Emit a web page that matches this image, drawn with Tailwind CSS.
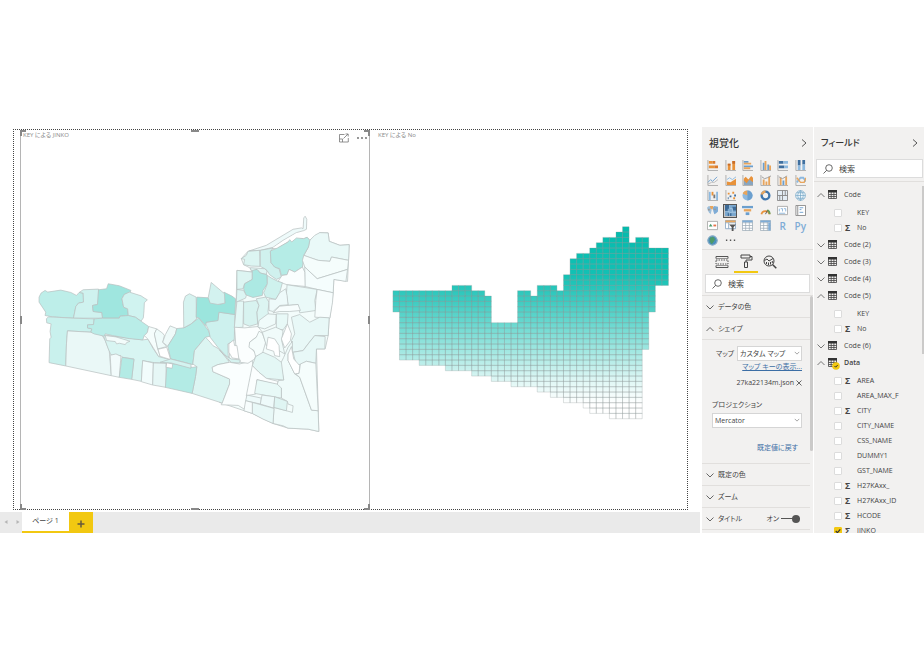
<!DOCTYPE html>
<html lang="ja">
<head>
    <meta charset="UTF-8">
    <meta name="viewport" content="width=device-width, initial-scale=1.0">
    <title>レポート</title>
    <script src="https://cdn.jsdelivr.net/npm/@tailwindcss/browser@4"></script>
</head>
<body class="flex min-h-screen items-center bg-white font-['Open_Sans','Noto_Sans_CJK_JP',sans-serif] text-[7px] leading-3 text-[#444] [font-feature-settings:'palt']">
    <div class="flex w-full">
        <!-- Report canvas -->
        <main class="flex min-w-0 flex-1 flex-col">
            <div class="grow pt-0.5 pr-3 pb-0.5 pl-[13px]">
                <div class="flex border border-dotted border-[#444] pt-px pl-1.5">
                    <section class="relative min-w-0 flex-[349] border-x border-[#b5b5b5]">
                        <h2 class="absolute top-0 left-0.5 text-[6px] leading-2 text-[#888]">KEY による JINKO</h2>
                        <div class="absolute top-0.5 right-0.5 flex items-center gap-2">
                            <button aria-label="フォーカス モード">
                                <svg class="size-2.5" viewBox="0 0 10 10" fill="none" stroke="#777"><path d="M5.500 1.500H.5V9H9.300V5M.5 6H3.500V9M4.500 5.500L9 1M6.500 1H9.200V3.500" stroke-width=".8"/></svg>
                            </button>
                            <button aria-label="その他">
                                <svg class="h-2.5 w-2.5" viewBox="0 0 10 10" fill="#666"><circle cx="1" cy="5" r=".9"/><circle cx="5" cy="5" r=".9"/><circle cx="9" cy="5" r=".9"/></svg>
                            </button>
                        </div>
                        <svg class="block w-full" viewBox="6 0 1041 1128" stroke="#b9c1c1" stroke-width="2.200" stroke-linejoin="round">
                            <g transform="translate(630 222)">
                                <path fill="#f3fcfb" d="M22 195L68 200 60 187 42 178 35 160 55 138 92 135 143 128 175 110 232 96 240 105 270 82 295 83 298 108 330 120 358 118 353 228 312 222 310 262 300 337 298 337 295 390 286 430 260 430 267 677 235 670 175 667 130 653 68 623 -30 590 18 360Z"/>
                            </g>
                            <!-- west -->
                            <g transform="translate(30 417)">
                                <path fill="#bdeee9" d="M30 80L36 68 48 60 56 65 95 59 125 66 142 75 150 66 162 68 163 95 148 98 140 108 133 143 70 139 48 135 50 125 40 110 30 95Z"/>
                                <path fill="#cff2ef" d="M162 58L208 56 207 85 205 102 190 105 192 123 218 126 220 143 133 143 140 108 148 98 163 95 162 68 150 66Z"/>
                                <path fill="#9fe6df" d="M208 58L232 55 237 40 270 46 305 60 302 66 285 72 278 85 283 110 295 115 297 135 272 137 270 143 220 143 218 126 192 123 190 105 205 102Z"/>
                                <path fill="#d0f3f0" d="M285 72L300 65 335 76 347 84 354 88 345 97 344 120 342 142 335 152 318 140 297 135 295 115 283 110 278 85Z"/>
                                <path fill="#c9f1ed" d="M58 139L133 143 195 145 193 162 175 163 175 172 188 175 185 185 115 181 112 220 110 286 60 276 62 205 66 200 63 183 66 160 53 157 52 145Z"/>
                                <path fill="#eaf8f7" d="M115 181L185 185 218 193 228 210 240 240 246 315 110 286 112 220Z"/>
                                <path fill="#d8f5f2" d="M222 193L340 208 356 206 372 235 388 258 410 264 452 274 450 285 410 278 375 276 340 270 336 332 307 326 314 265 280 260 275 255 245 253 236 232Z"/>
                                <path fill="#b9ede8" d="M195 145L220 143 270 143 272 137 297 135 318 140 335 152 358 168 354 186 345 195 340 208 300 204 250 195 228 190 225 197 195 190 185 185 188 175 175 172 175 163 193 162Z"/>
                                <path fill="#f3fcfb" d="M228 195L260 199 302 212 292 216 288 222 270 218 262 220 258 213 232 210Z"/>
                                <path fill="#f2fbfb" d="M243 254L260 250 275 257 270 320 246 315Z"/>
                                <path fill="#b3ebe5" d="M278 260L314 266 307 326 270 320Z"/>
                                <path fill="#f2fcfc" d="M340 270L372 277 370 343 336 333Z"/>
                                <path fill="#e6f7f6" d="M372 277L410 278 410 350 370 343Z"/>
                                <path fill="#f5fdfc" d="M358 168L382 175 375 190 385 235 392 255 388 258 356 206 345 195 354 186Z"/>
                                <path fill="#effbfa" d="M382 175L400 188 405 195 400 215 412 228 385 235 375 190Z"/>
                                <path fill="#eefaf9" d="M408 192L422 166 442 174 438 190 415 227 400 215Z"/>
                                <path fill="#fff" d="M386 236L412 230 424 267 392 257Z"/>
                            </g>
                            <!-- centre -->
                            <g transform="translate(390 417)">
                                <path fill="#b3ebe5" d="M82 174L103 172 125 160 148 142 178 182 182 197 168 200 135 240 130 282 90 271 64 265 55 227 78 190Z"/>
                                <path fill="#d6f3f0" d="M102 95L108 77 120 70 140 80 141 145 125 160 103 172Z"/>
                                <path fill="#cdf1ee" d="M208 125L256 132 254 210 235 220 236 255 243 270 205 230 182 200 178 180 168 160 170 155 205 150Z"/>
                                <path fill="#9be5dd" d="M142 80L176 82 205 102 226 98 223 65 247 77 258 85 256 132 208 125 205 150 170 155 168 165 148 142 140 140Z"/>
                                <path fill="#d3f2ef" d="M185 36L225 70 226 98 205 102 182 98 176 82Z"/>
                                <path fill="#dcf5f2" d="M168 200L182 215 190 225 208 235 240 275 205 282 188 290 190 303 240 325 240 340 218 397 128 368 138 318 142 288 130 280 135 240Z"/>
                                <path fill="#b3ebe5" d="M53 276L130 290 142 288 138 318 128 368 48 350Z"/>
                                <path fill="#fff" d="M52 276L70 280 68 293 50 290Z"/>
                                <path fill="#d3f3f0" d="M64 265L110 277 125 281 124 293 65 277 32 275Z"/>
                                <path fill="#fafefe" d="M240 275L270 280 308 270 310 285 290 390 285 416 266 404 215 402 218 397 240 340 240 325 190 303 188 290 205 282Z"/>
                                <path fill="#e4f8f6" d="M254 172L262 92 282 92 280 170Z"/>
                            </g>
                            <!-- north east -->
                            <g transform="translate(630 222)">
                                <path fill="#eefafa" d="M58 137L110 120 160 90 190 72 215 68 220 70 222 38 226 33 231 42 230 72 222 76 200 82 160 105 130 126 92 135Z"/>
                                <path fill="#dcf5f2" d="M35 160L50 150 55 138 90 135 91 183 65 182 42 178 45 162Z"/>
                                <path fill="#d0f1ee" d="M92 135L130 128 122 140 124 172 135 185 148 190 155 215 140 222 120 208 112 195 105 190 92 183Z"/>
                                <path fill="#fff" stroke="none" d="M130 127L200 84 232 94 222 99 200 98 186 110 180 103 143 128Z"/>
                                <path fill="#eaf9f8" d="M240 105L255 90 270 82 295 83 298 108 330 120 358 118 356 165 305 155 300 168 265 165 235 155 222 150 236 125Z"/>
                                <path fill="#b5ece6" d="M143 128L175 110 180 103 186 110 200 98 222 100 232 96 240 105 236 125 222 150 218 185 195 200 178 192 172 208 155 210 150 190 135 185 124 172 122 137Z"/>
                                <path fill="#f5fdfc" d="M222 150L265 165 300 168 305 155 356 165 353 192 262 220 225 185 218 165Z"/>
                                <path fill="#f5fdfd" d="M225 185L262 220 353 192 348 228 312 222 310 262 262 252 225 243Z"/>
                                <path fill="#fafefe" d="M218 185L225 200 226 243 172 238 145 228 157 210 172 208 178 192 195 200Z"/>
                                <path fill="#ddf5f2" d="M22 195L68 200 68 222 45 235 40 250 22 252Z"/>
                                <path fill="#dff6f4" d="M62 187L105 190 112 197 110 207 92 203 82 192 66 198Z"/>
                                <path fill="#ace9e3" d="M68 195L82 192 92 203 112 208 113 235 100 255 98 270 70 276 48 268 42 250 45 235 68 222Z"/>
                                <path fill="#cff2ee" d="M113 210L125 218 145 228 158 232 150 262 138 282 108 275 102 262 105 255 113 235Z"/>
                                <path fill="#eaf9f8" d="M172 238L262 252 255 285 258 315 210 322 205 297 175 300 170 265Z"/>
                                <path fill="#f7fdfd" d="M262 252L310 262 308 290 300 338 255 335 258 285Z"/>
                                <path fill="#dcf5f3" d="M22 252L42 255 50 270 48 278 20 290Z"/>
                                <path fill="#d8f3f0" d="M42 290L80 285 88 300 82 320 84 355 60 362 42 355Z"/>
                                <path fill="#dcf5f2" d="M80 280L108 275 118 290 115 318 120 340 105 362 85 360 82 320 88 300Z"/>
                                <path fill="#eefafa" d="M118 280L138 282 150 262 168 250 172 270 175 298 150 300 130 318 118 315Z"/>
                                <path fill="#f7fdfd" d="M130 322L150 302 205 297 212 315 180 318 150 318Z"/>
                            </g>
                            <!-- south east -->
                            <g transform="translate(600 537)">
                                <path fill="#fbfefe" d="M45 50L75 52 115 48 128 65 90 95 92 110 110 130 105 145 85 158 62 155 50 125Z"/>
                                <path fill="#d6f3f0" d="M0 118L12 132 35 145 62 148 60 157 35 155Z"/>
                                <path fill="#fff" d="M28 100L42 88 45 105 52 105 58 145 38 142 28 125Z"/>
                                <path fill="#f5fdfc" d="M118 62L128 68 138 95 128 130 108 138 103 120 88 110 90 95 110 80Z"/>
                                <path fill="#f0fbfa" d="M118 30L145 10 170 12 168 40 135 55 115 50Z"/>
                                <path fill="#e8f9f7" d="M170 10L205 10 203 40 190 58 170 55Z"/>
                                <path fill="#f0fbfa" d="M128 65L168 50 190 60 186 90 195 130 160 110 140 105Z"/>
                                <path fill="#fff" d="M145 80L165 85 178 105 180 138 165 135 162 122 140 115Z"/>
                                <path fill="#e8f8f7" d="M215 20L240 12 270 35 300 20 328 22 325 75 285 75 265 100 250 120 218 125 215 90 225 70Z"/>
                                <path fill="#fff" d="M203 40L215 70 212 90 195 112 185 85Z"/>
                                <path fill="#e8f8f7" d="M285 75L316 78 315 115 290 115 288 158 260 152 245 160 230 165 220 125 250 120 265 100Z"/>
                                <path fill="#f0fbfa" d="M192 140L205 110 218 92 218 115 205 130 205 150 225 190 240 200 275 298 295 300 297 362 265 355 205 352 190 345 160 338 163 290 200 300 218 305 220 285 205 280 203 272 185 262 185 232 172 225 175 210 192 208 182 160Z"/>
                                <path fill="#fff" d="M215 108L222 145 240 165 238 188 225 190 205 150 205 130Z"/>
                                <path fill="#f5fdfc" d="M260 152L288 158 295 300 275 298 240 200 228 190 238 188 242 160Z"/>
                                <path fill="#e4f7f5" d="M108 138L130 125 165 140 185 155 192 208 140 203 118 185 98 165Z"/>
                                <path fill="#fbfefe" d="M98 165L118 185 140 203 175 212 172 222 112 207 108 250 80 255Z"/>
                                <path fill="#e8f9f7" d="M112 207L172 220 185 232 185 262 160 258 105 248Z"/>
                                <path fill="#eefafa" d="M82 253L125 262 123 280 78 270Z"/>
                                <path fill="#eefafa" d="M127 253L165 258 162 292 122 280Z"/>
                                <path fill="#dff5f3" d="M165 258L203 272 200 300 163 290Z"/>
                                <path fill="#e8f8f7" d="M98 275L163 293 160 338 130 325 98 308Z"/>
                                <path fill="#f7fdfd" d="M78 270L98 275 98 308 73 300Z"/>
                            </g>
                        </svg>
                        <!-- resize handles -->
                        <span class="absolute -top-px -left-px size-1.5 border-t-2 border-l-2 border-[#888]"></span>
                        <span class="absolute -top-px -right-px size-1.5 border-t-2 border-r-2 border-[#888]"></span>
                        <span class="absolute -bottom-px -left-px size-1.5 border-b-2 border-l-2 border-[#888]"></span>
                        <span class="absolute -right-px -bottom-px size-1.5 border-r-2 border-b-2 border-[#888]"></span>
                        <span class="absolute -top-px left-1/2 h-0.5 w-2 -translate-x-1/2 bg-[#888]"></span>
                        <span class="absolute -bottom-px left-1/2 h-0.5 w-2 -translate-x-1/2 bg-[#888]"></span>
                        <span class="absolute top-1/2 -left-px h-2 w-0.5 -translate-y-1/2 bg-[#888]"></span>
                        <span class="absolute top-1/2 -right-px h-2 w-0.5 -translate-y-1/2 bg-[#888]"></span>
                    </section>
                    <section class="relative min-w-0 flex-[318]">
                        <h2 class="absolute top-0 left-2 text-[6px] leading-2 text-[#888]">KEY による No</h2>
                        <svg id="grid-map" class="block w-full" viewBox="370 131 318 376">
                            <defs>
                                <linearGradient id="teal" gradientUnits="userSpaceOnUse" x1="0" y1="227" x2="0" y2="420">
                                    <stop offset="0" stop-color="#03bbad"/>
                                    <stop offset=".25" stop-color="#12c1b4"/>
                                    <stop offset=".38" stop-color="#3bcbc0"/>
                                    <stop offset=".5" stop-color="#68d8cf"/>
                                    <stop offset=".65" stop-color="#a3e8e2"/>
                                    <stop offset=".8" stop-color="#dff7f5"/>
                                    <stop offset=".92" stop-color="#fff"/>
                                </linearGradient>
                            </defs>
                        </svg>
                    </section>
                </div>
            </div>
            <nav class="flex h-[21px] bg-[#eaeaea]">
                <button class="w-3 pl-1" aria-label="前のページ"><svg class="size-1" viewBox="0 0 4 4" fill="#b5b5b5"><path d="M3.500 0V4L.5 2Z"/></svg></button>
                <button class="w-2.5 pl-1" aria-label="次のページ"><svg class="size-1" viewBox="0 0 4 4" fill="#b5b5b5"><path d="M.5 0V4L3.500 2Z"/></svg></button>
                <button class="w-[47px] border-b-2 border-[#f2c811] bg-white">ページ 1</button>
                <button class="flex w-6 items-center justify-center bg-[#f2c811]" aria-label="新しいページ">
                    <svg class="mt-1 size-2" viewBox="0 0 8 8" stroke="#665a3c" stroke-width="1.500"><path d="M4 .5V7.500M.5 4H7.500"/></svg>
                </button>
            </nav>
        </main>

        <!-- Visualizations -->
        <aside class="ml-0.5 flex w-[111px] shrink-0 flex-col bg-[#f2f1f0]">
            <header class="flex h-[31px] items-center justify-between pr-1.5 pl-[7px]">
                <h2 class="text-[10px] font-medium text-[#333]">視覚化</h2>
                <button aria-label="折りたたむ"><svg class="h-2 w-1.5" viewBox="0 0 6 8" fill="none" stroke="#555"><path d="M1 .5L5 4 1 7.500"/></svg></button>
            </header>
            <div id="visuals" class="grid grid-cols-6 pr-1 pl-0.5"></div>
            <div class="mt-px flex h-6 border-t border-[#e1dfdd] px-2">
                <button class="flex w-6 items-center justify-center" aria-label="フィールド">
                    <svg class="size-3.5" viewBox="0 0 14 14" fill="none" stroke="#555"><path d="M1 3.500V1.500H13V3.500M1 10.500V12.500H13V10.500"/><path d="M1 5H13V9H1Z" stroke-dasharray="1.500 1"/><path d="M1 3.500H13M1 10.500H13" stroke-width=".6"/></svg>
                </button>
                <button class="flex w-6 items-center justify-center border-b-2 border-[#f2c811]" aria-label="書式">
                    <svg class="size-3.5" viewBox="0 0 14 14" fill="none" stroke="#444"><path d="M2 1H11V4H2ZM11 2.500H13V6H7V8M5.500 8H8.500V13.500H5.500Z"/></svg>
                </button>
                <button class="flex w-6 items-center justify-center" aria-label="分析">
                    <svg class="size-3.5" viewBox="0 0 14 14" fill="none" stroke="#444"><circle cx="6" cy="6" r="5"/><path d="M9.500 9.500L13.300 13.300" stroke-width="1.500"/><path d="M1.500 5.500L4 4 6 6 10 3.500M3.500 9V7M5.500 10V7.500M7.500 9.500V7M9.300 8V6"/></svg>
                </button>
            </div>
            <label class="mt-px mr-[3px] mb-0.5 ml-[3px] flex h-[19px] items-center gap-1.5 border border-[#dcdcdc] bg-white px-1.5">
                <svg class="size-2.5 shrink-0" viewBox="0 0 10 10" fill="none" stroke="#444" stroke-width=".8"><circle cx="6" cy="4" r="3.300"/><path d="M3.600 6.400L.5 9.500"/></svg>
                <input type="search" placeholder="検索" aria-label="視覚化を検索" class="w-full min-w-0 bg-transparent text-[8px] outline-none placeholder:text-[#444]">
            </label>
            <div class="flex grow border-t border-[#e1dfdd]">
                <div class="min-w-0 flex-1">
                    <button class="flex h-[22px] w-full items-center gap-1 border-b border-[#e1dfdd] pl-1">
                        <svg class="h-2 w-2" viewBox="0 0 8 8" fill="none" stroke="#666"><path d="M.5 2.500L4 6 7.500 2.500"/></svg>データの色
                    </button>
                    <button class="flex h-[22px] w-full items-center gap-1 border-b border-[#e1dfdd] pl-1">
                        <svg class="h-2 w-2" viewBox="0 0 8 8" fill="none" stroke="#666"><path d="M.5 6L4 2.500 7.500 6"/></svg>シェイプ
                    </button>
                    <div class="border-b border-[#e1dfdd] pt-1.5 pr-2 pb-[9px] pl-2.5">
                        <div class="flex items-center justify-between pl-1">
                            <label for="map">マップ</label>
                            <div class="relative w-[65px]">
                                <select id="map" class="h-[15px] w-full appearance-none border border-[#d5d5d5] bg-white pl-0.5"><option>カスタム マップ</option></select>
                                <svg class="pointer-events-none absolute top-1 right-0.5 size-1.5" viewBox="0 0 8 8" fill="none" stroke="#888"><path d="M1 2.500L4 5.500 7 2.500"/></svg>
                            </div>
                        </div>
                        <a href="#" class="block text-right text-[#3c6ea5] underline">マップ キーの表示...</a>
                        <div class="mt-1 flex items-center justify-end gap-0.5">
                            27ka22134m.json
                            <button aria-label="削除"><svg class="size-1.5" viewBox="0 0 6 6" stroke="#555" stroke-width=".9"><path d="M.5.5L5.500 5.500M5.500.5L.5 5.500"/></svg></button>
                        </div>
                        <label for="projection" class="mt-2.5 block">プロジェクション</label>
                        <div class="relative mt-0.5">
                            <select id="projection" class="h-[15px] w-full appearance-none border border-[#d5d5d5] bg-white pl-0.5"><option>Mercator</option></select>
                            <svg class="pointer-events-none absolute top-1 right-0.5 size-1.5" viewBox="0 0 8 8" fill="none" stroke="#888"><path d="M1 2.500L4 5.500 7 2.500"/></svg>
                        </div>
                        <button class="mt-3.5 mr-1 ml-auto block text-[#3c6ea5]">既定値に戻す</button>
                    </div>
                    <button class="flex h-[22px] w-full items-center gap-1 border-b border-[#e1dfdd] pl-1">
                        <svg class="h-2 w-2" viewBox="0 0 8 8" fill="none" stroke="#666"><path d="M.5 2.500L4 6 7.500 2.500"/></svg>既定の色
                    </button>
                    <button class="flex h-[22px] w-full items-center gap-1 border-b border-[#e1dfdd] pl-1">
                        <svg class="h-2 w-2" viewBox="0 0 8 8" fill="none" stroke="#666"><path d="M.5 2.500L4 6 7.500 2.500"/></svg>ズーム
                    </button>
                    <div class="flex h-[22px] items-center justify-between border-b border-[#e1dfdd] pr-2.5 pl-1">
                        <button class="flex items-center gap-1"><svg class="h-2 w-2" viewBox="0 0 8 8" fill="none" stroke="#666"><path d="M.5 2.500L4 6 7.500 2.500"/></svg>タイトル</button>
                        <label class="flex items-center gap-0.5">オン
                            <span class="relative flex h-2 w-[19px] items-center">
                                <span class="h-px w-full bg-[#555]"></span>
                                <input type="checkbox" checked class="absolute right-0 size-2 appearance-none rounded-full bg-[#555]">
                            </span>
                        </label>
                    </div>
                </div>
                <div class="h-[155px] w-[3px] rounded-sm bg-[#cbcac9]"></div>
            </div>
        </aside>

        <!-- Fields -->
        <aside class="ml-px flex w-[110px] shrink-0 flex-col bg-[#f2f1f0]">
            <header class="flex h-[31px] items-center justify-between pr-1.5 pl-[7px]">
                <h2 class="text-[9px] font-medium text-[#333]">フィールド</h2>
                <button aria-label="折りたたむ"><svg class="h-2 w-1.5" viewBox="0 0 6 8" fill="none" stroke="#555"><path d="M1 .5L5 4 1 7.500"/></svg></button>
            </header>
            <label class="mt-px mr-px mb-[3px] ml-0.5 flex h-[19px] items-center gap-1.5 border border-[#dcdcdc] bg-white px-1.5">
                <svg class="size-2.5 shrink-0" viewBox="0 0 10 10" fill="none" stroke="#444" stroke-width=".8"><circle cx="6" cy="4" r="3.300"/><path d="M3.600 6.400L.5 9.500"/></svg>
                <input type="search" placeholder="検索" aria-label="フィールドを検索" class="w-full min-w-0 bg-transparent text-[8px] outline-none placeholder:text-[#444]">
            </label>
            <div class="flex h-0 grow overflow-hidden border-t border-[#e1dfdd] pt-1">
                <ul id="fields" class="min-w-0 flex-1 pl-[3px]"></ul>
                <div class="h-[168px] w-0.5 bg-[#cbcac9]"></div>
            </div>
        </aside>
    </div>

    <script>
        // Grid cartogram: [number of columns, first row, end row]
        const runs = [
            [1, 12, 16], [3, 12, 25], [4, 12, 26], [1, 12, 27], [3, 11, 27], [2, 12, 28], [1, 13, 28],
            [3, 18, 29], [1, 18, 30], [2, 12, 30], [1, 13, 30], [2, 11, 31], [1, 11, 32], [1, 12, 32],
            [1, 9, 33], [1, 6, 33], [1, 5, 33], [1, 5, 34], [1, 4, 35], [1, 3, 35], [1, 2, 35],
            [1, 2, 36], [1, 1, 36], [1, 0, 36], [1, 3, 36], [1, 2, 36], [1, 2, 23], [1, 4, 16], [2, 4, 11]
        ];
        const cellW = 6.58;
        const cellH = 5.35;
        let col = 0;
        let cells = '';
        runs.forEach(([count, top, end]) => {
            for (let i = 0; i < count; i++, col++) {
                for (let row = top; row < end; row++) {
                    cells += `M${393 + col * cellW} ${227 + row * cellH}h${cellW}v${cellH}h${-cellW}z`;
                }
            }
        });
        document.getElementById('grid-map').insertAdjacentHTML('beforeend',
            `<path d="${cells}" fill="url(#teal)" stroke="#8f9b9b" stroke-opacity=".5" stroke-width=".6"/>`);

        // Visual types, drawn on a 12 x 12 box
        const axis = '<path d="M1 0V11.500H12" fill="none" stroke="#999" stroke-width=".8"/>';
        const box = '<path d="M.5 1.500H11.500V10.500H.5Z" fill="#fff" stroke="#aaa"/>';
        const visuals = [
            ['積み上げ横棒', axis + '<path d="M2 1H6V4H2ZM2 6H8V9H2Z" fill="#e8923a"/><path d="M6 1H9V4H6ZM8 6H12V9H8Z" fill="#d97a2b"/>'],
            ['積み上げ縦棒', axis + '<path d="M3 4H6V11H3ZM8 1H11V11H8Z" fill="#e8923a"/><path d="M3 4H6V6H3ZM8 1H11V4H8Z" fill="#c96d28"/>'],
            ['集合横棒', axis + '<path d="M2 1H7V3H2ZM2 6H12V8H2Z" fill="#6b9fce"/><path d="M2 3H10V5H2ZM2 8H9V10H2Z" fill="#e8a55c"/>'],
            ['集合縦棒', axis + '<path d="M3 3H5V11H3ZM8 5H10V11H8Z" fill="#6b9fce"/><path d="M5 1H7V11H5ZM10 6H12V11H10Z" fill="#e8a55c"/>'],
            ['100% 横棒', axis + '<path d="M2 1H7V4H2ZM2 6H8V9H2Z" fill="#3f6f9f"/><path d="M7 1H12V4H7ZM8 6H12V9H8Z" fill="#8db9df"/>'],
            ['100% 縦棒', axis + '<path d="M3 0H6V6H3ZM8 0H11V5H8Z" fill="#3f6f9f"/><path d="M3 6H6V11H3ZM8 5H11V11H8Z" fill="#8db9df"/>'],
            ['折れ線', axis + '<path d="M1 8L4 5 6 7 11 2" fill="none" stroke="#6b9fce"/><path d="M1 10L5 8 8 8 12 5" fill="none" stroke="#bbb"/>'],
            ['面', axis + '<path d="M2 7L6 8 12 4V11H2Z" fill="#e8923a"/><path d="M2 5L5 3 8 5 12 2" fill="none" stroke="#8db9df"/>'],
            ['積み上げ面', axis + '<path d="M2 4L4 2 7 5 10 1 12 3V11H2Z" fill="#e8923a"/><path d="M2 6L5 9 8 5 12 8V11H2Z" fill="#8aa6bf"/>'],
            ['折れ線と積み上げ縦棒', axis + '<path d="M3 5H5V11H3ZM6 7H8V11H6ZM9 2H11V11H9Z" fill="#e8a55c"/><path d="M2 2L5 4 8 3 12 1" fill="none" stroke="#999"/>'],
            ['折れ線と集合縦棒', axis + '<path d="M3 3H5V11H3ZM9 2H11V11H9Z" fill="#e8a55c"/><path d="M6 6H8V11H6Z" fill="#6b9fce"/><path d="M2 2L6 4 11 1" fill="none" stroke="#999"/>'],
            ['リボン', axis + '<path d="M2 8L6 3H9L12 7" fill="none" stroke="#8db9df" stroke-width="2"/><path d="M2 3L6 8H10L12 3" fill="none" stroke="#e8a55c" stroke-width="1.500"/>'],
            ['ウォーターフォール', axis + '<path d="M2 2H4V11H2Z" fill="#8db9df"/><path d="M5 2H7V6H5Z" fill="#e8923a"/><path d="M7 5H9V9H7Z" fill="#777"/><path d="M10 2H12V11H10Z" fill="#8db9df"/>'],
            ['散布図', axis + '<path d="M3 3H5V5H3ZM8 2H10V4H8ZM9 8H11V10H9Z" fill="#e8923a"/><path d="M5 6H7V8H5ZM10 5H12V7H10ZM3 8H4V10H3Z" fill="#3f6f9f"/>'],
            ['円', '<circle cx="6" cy="6" r="5.500" fill="#8db9df"/><path d="M6 6V.5A5.500 5.500 0 0 0 .8 4Z" fill="#e8a55c"/><path d="M6 6V.5A5.500 5.500 0 0 1 6 11.500Z" fill="#6b9fce"/>'],
            ['ドーナツ', '<circle cx="6" cy="6" r="4.200" fill="none" stroke="#3f76ad" stroke-width="2.600"/><path d="M2 5A4.200 4.200 0 0 1 6 1.800" fill="none" stroke="#e8a55c" stroke-width="2.600"/>'],
            ['ツリーマップ', '<path d="M.5.5H11.500V11.500H.5ZM6 .5V11.500M.5 6H11.500M9 .5V6M3 6V11" fill="#e4edf5" stroke="#888"/>'],
            ['マップ', '<circle cx="6" cy="6" r="5.300" fill="#eef6fb" stroke="#6fa3c4" stroke-width=".8"/><path d="M6 .7V11.300M.7 6H11.300M2 3H10M2 9H10M6 .7C2 4 2 8 6 11.300M6 .7C10 4 10 8 6 11.300" fill="none" stroke="#6fa3c4" stroke-width=".7"/>'],
            ['塗り分け地図', '<path d="M0 3L2 1 5 2 5 6 4 10 2 8 1 6Z" fill="#9ebfdb"/><path d="M6 3L8 1 12 2 12 7 10 9 8 10 7 7Z" fill="#7facd6"/><path d="M3 1H7L6 5 4 4Z" fill="#e8a55c"/><path d="M7 4L10 4 9 6ZM1 4H3V6H1Z" fill="#999"/>'],
            ['図形マップ', '<path d="M0 0H12V12H0Z" fill="#7ba8cf"/><path d="M0 0H5V4H3V7H0ZM8 2H12V6H9ZM3 9H7V12H3Z" fill="#3d6a96"/><path d="M5 0V4H8V8H5V12M8 8H12M0 7H5" fill="none" stroke="#b8d4ea" stroke-width=".7"/>'],
            ['じょうご', '<path d="M0 1H12V3.500H0Z" fill="#6b9fce"/><path d="M2 4.500H10V7H2Z" fill="#e8a55c"/><path d="M4 8H8V11H4Z" fill="#6b9fce"/>'],
            ['ゲージ', '<path d="M1.500 10A4.700 4.700 0 0 1 10.500 10" fill="none" stroke="#e8923a" stroke-width="2"/><path d="M8 5.500A4.700 4.700 0 0 1 10.500 10" fill="none" stroke="#6a9b5b" stroke-width="2"/><path d="M6 10L8 6" stroke="#555"/>'],
            ['カード', box + '<path d="M2.500 4V7M4 4H6V7M7.500 4H9.500V7M2 9H9" fill="none" stroke="#7facd6" stroke-width=".9"/>'],
            ['複数の行カード', '<path d="M1 .5H11.500V11.500H1Z" fill="#fff" stroke="#888"/><path d="M3 1V11" stroke="#888"/><path d="M5 3H9M5 5H7M5 8H9" stroke="#6b9fce"/>'],
            ['KPI', box + '<path d="M2 7L4 4 6 7Z" fill="#4d9a6a"/><path d="M7 5H10V7H7Z" fill="#e8734a"/>'],
            ['スライサー', '<path d="M.5.5H11.500V9.500H.5ZM.5 3H11.500M4 3V9.500" fill="#fff" stroke="#8da9c4"/><path d="M.5.5H11.500V2.500H.5Z" fill="#e8a55c"/><path d="M4.500 5H12L9.300 8V12H7.300V8Z" fill="#555"/>'],
            ['テーブル', '<path d="M.5.5H11.500V11.500H.5ZM.5 3H11.500M.5 6H11.500M.5 9H11.500M4 1V11.500M8 1V11.500" fill="#fff" stroke="#9aa9b5" stroke-width=".8"/><path d="M.5.5H11.500V2.500H.5Z" fill="#7facd6"/>'],
            ['マトリックス', '<path d="M.5.5H11.500V11.500H.5ZM.5 3H11.500M.5 6H11.500M.5 9H11.500M4 1V11.500M8 1V11.500" fill="#fff" stroke="#9aa9b5" stroke-width=".8"/><path d="M.5.5H11.500V2.500H.5ZM9 3H11.500V11.500H9Z" fill="#7facd6"/>'],
            ['R スクリプト', '', 'R'],
            ['Python', '', 'Py'],
            ['ArcGIS', '<circle cx="6" cy="6" r="5.500" fill="#4a8fc0"/><circle cx="6" cy="6" r="5" fill="none" stroke="#9bb5c5"/><path d="M3 3L7 2 9 5 7 8 5 10 3 7Z" fill="#4d9a6a"/>'],
            ['その他', '<path d="M1 5H2.500V6.500H1ZM5.300 5H6.800V6.500H5.300ZM9.600 5H11.100V6.500H9.600Z" fill="#555"/>']
        ];
        document.getElementById('visuals').innerHTML = visuals.map(([name, art, text]) => {
            const ring = name === '図形マップ' ? 'bg-[#c8c6c4] outline outline-[#555]' : '';
            const body = text
                ? `<span class="text-[10px] leading-3 font-semibold text-[#7facd6]">${text}</span>`
                : `<svg class="size-[11px]" viewBox="0 0 12 12">${art}</svg>`;
            return `<button class="flex h-[15px] items-center justify-center" aria-label="${name}"><span class="flex size-3 items-center justify-center ${ring}">${body}</span></button>`;
        }).join('');

        // Tables; fields marked with + are numeric
        const tables = [
            ['Code', ['KEY', '+No']],
            ['Code (2)'], ['Code (3)'], ['Code (4)'],
            ['Code (5)', ['KEY', '+No']],
            ['Code (6)'],
            ['Data', ['+AREA', 'AREA_MAX_F', '+CITY', 'CITY_NAME', 'CSS_NAME', 'DUMMY1', 'GST_NAME', '+H27KAxx_', '+H27KAxx_ID', '+HCODE', '+JINKO']]
        ];
        const fieldRow = (field) => {
            const name = field.replace('+', '');
            const checked = name === 'JINKO';
            return `<li><label class="flex h-[15px] items-center">
                <span class="relative flex size-2">
                    <input type="checkbox" ${checked ? 'checked' : ''} class="size-2 appearance-none rounded-[1px] border border-[#dcdcdc] bg-white checked:border-[#f2c811] checked:bg-[#f2c811]">
                    ${checked ? '<svg class="absolute inset-0 size-2" viewBox="0 0 7 7" fill="none" stroke="#333"><path d="M1.500 3.500L3 5 5.500 2"/></svg>' : ''}
                </span>
                <span class="w-[15px] pl-[3px] text-[9px] font-bold">${field[0] === '+' ? 'Σ' : ''}</span>${name}
            </label></li>`;
        };
        document.getElementById('fields').innerHTML = tables.map(([name, fields]) => `
            <li>
                <button class="flex h-[17px] items-center ${name === 'Data' ? 'font-semibold' : ''}">
                    <svg class="size-2" viewBox="0 0 8 8" fill="none" stroke="#777"><path d="${fields ? 'M.5 6L4 2.500 7.500 6' : 'M.5 2.500L4 6 7.500 2.500'}"/></svg>
                    <span class="relative mr-[7px] ml-[3px]">
                        <svg class="size-[9px]" viewBox="0 0 9 9" fill="none" stroke="#444" stroke-width=".8"><path d="M.5.5H8.500V8.500H.5ZM.5 4.500H8.500M.5 6.500H8.500M3.200 2V8.500M5.900 2V8.500"/><path d="M0 0H9V2.500H0Z" fill="#333" stroke="none"/></svg>
                        ${name === 'Data' ? '<svg class="absolute top-1 left-1 size-2" viewBox="0 0 8 8"><circle cx="4" cy="4" r="3.800" fill="#f2c811"/><path d="M2.500 4L3.700 5.200 5.700 3" fill="none" stroke="#333"/></svg>' : ''}
                    </span>${name}
                </button>
                ${fields ? `<ul class="pt-0.5 pb-px pl-[17px]">${fields.map(fieldRow).join('')}</ul>` : ''}
            </li>`).join('');
    </script>
</body>
</html>
